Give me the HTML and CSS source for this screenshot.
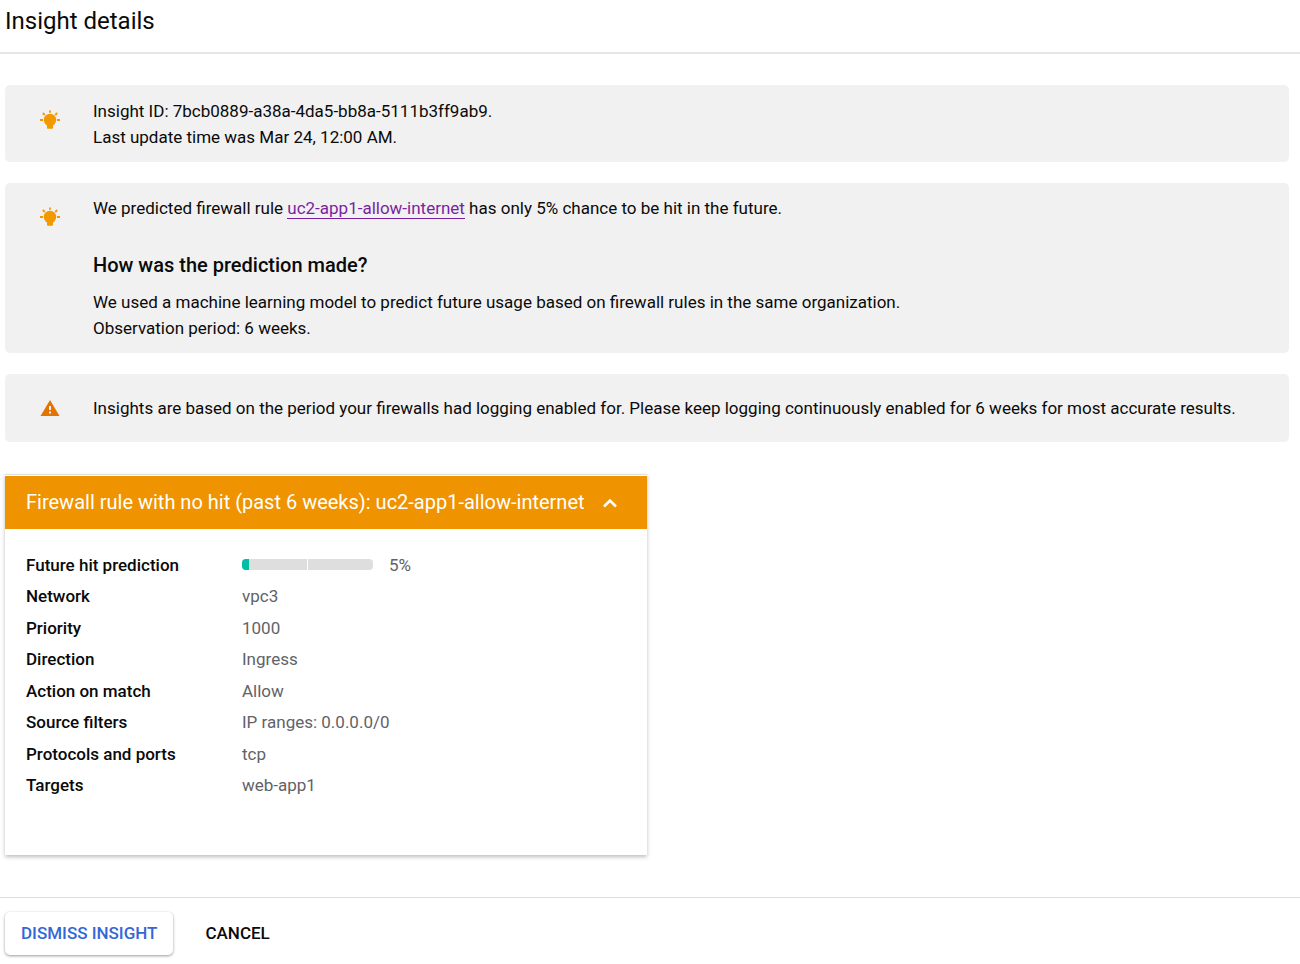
FILE: index.html
```html
<!DOCTYPE html>
<html lang="en">
<head>
<meta charset="utf-8">
<meta name="viewport" content="width=device-width, initial-scale=1">
<title>Insight details</title>
<link rel="stylesheet" href="styles.css">
</head>
<body>
<header class="page-header">
  <h1 class="page-title">Insight details</h1>
</header>
<main class="content">
  <section class="note note-summary">
    <svg class="note-icon" viewBox="0 0 24 24" aria-hidden="true">
      <circle cx="12" cy="12" r="6.2" fill="#f29900"/>
      <path d="M9 16h6v4q0 .8-.8.8H9.800q-.8 0-.8-.8z" fill="#f29900"/>
      <path d="M12 2.500v2.200M4.800 5l2 2M19.200 5l-2 2M2 12h3M19 12h3" stroke="#f29900" stroke-width="1.800" fill="none"/>
    </svg>
    <div class="note-text">
      <p>Insight ID: 7bcb0889-a38a-4da5-bb8a-5111b3ff9ab9.</p>
      <p>Last update time was Mar 24, 12:00 AM.</p>
    </div>
  </section>
  <section class="note">
    <svg class="note-icon" viewBox="0 0 24 24" aria-hidden="true">
      <circle cx="12" cy="12" r="6.2" fill="#f29900"/>
      <path d="M9 16h6v4q0 .8-.8.8H9.800q-.8 0-.8-.8z" fill="#f29900"/>
      <path d="M12 2.500v2.200M4.800 5l2 2M19.200 5l-2 2M2 12h3M19 12h3" stroke="#f29900" stroke-width="1.800" fill="none"/>
    </svg>
    <div class="note-text">
      <p>We predicted firewall rule <a class="rule-link" href="#rule">uc2-app1-allow-internet</a> has only 5% chance to be hit in the future.</p>
      <h2 class="note-heading">How was the prediction made?</h2>
      <p>We used a machine learning model to predict future usage based on firewall rules in the same organization.</p>
      <p>Observation period: 6 weeks.</p>
    </div>
  </section>
  <section class="note note-warning">
    <svg class="note-icon" viewBox="0 0 24 24" aria-hidden="true">
      <path d="M12 4L21.500 20h-19z" fill="#e37400"/>
      <path d="M12 10v4M12 15.500v2" stroke="#f1f1f1" stroke-width="2"/>
    </svg>
    <div class="note-text">
      <p>Insights are based on the period your firewalls had logging enabled for. Please keep logging continuously enabled for 6 weeks for most accurate results.</p>
    </div>
  </section>
  <section class="rule-card" id="rule">
    <button class="rule-toggle" type="button" aria-expanded="true">
      <span>Firewall rule with no hit (past 6 weeks): uc2-app1-allow-internet</span>
      <svg class="chevron" viewBox="0 0 16 16" aria-hidden="true"><path d="M2 11.500l6-6 6 6" fill="none" stroke="#fff" stroke-width="2.500"/></svg>
    </button>
    <dl class="rule-details">
      <dt>Future hit prediction</dt>
      <dd class="prediction"><span class="bar"><span class="bar-fill" style="width: 5%"></span></span>5%</dd>
      <dt>Network</dt><dd>vpc3</dd>
      <dt>Priority</dt><dd>1000</dd>
      <dt>Direction</dt><dd>Ingress</dd>
      <dt>Action on match</dt><dd>Allow</dd>
      <dt>Source filters</dt><dd>IP ranges: 0.0.0.0/0</dd>
      <dt>Protocols and ports</dt><dd>tcp</dd>
      <dt>Targets</dt><dd>web-app1</dd>
    </dl>
  </section>
</main>
<footer class="actions">
  <button class="btn btn-raised" type="button">DISMISS INSIGHT</button>
  <button class="btn" type="button">CANCEL</button>
</footer>
</body>
</html>
```
FILE: styles.css
```css
* { box-sizing: border-box; }

body {
  margin: 0;
  background: #fff;
  color: #0a0a0a;
  font: 17px/26px Roboto, "Liberation Sans", sans-serif;
}

h1, h2, p, dl, dd { margin: 0; }

button { font-family: inherit; cursor: pointer; }

.page-header {
  padding: 5px 5px 14px;
  border-bottom: 2px solid #e6e6e6;
}

.page-title {
  font-size: 24px;
  font-weight: 400;
  line-height: 33px;
}

.content {
  display: flex;
  flex-direction: column;
  gap: 21px;
  padding: 31px 11px 42px 5px;
}

.note {
  display: flex;
  align-items: flex-start;
  gap: 31px;
  padding: 12px 33px;
  border-radius: 5px;
  background: #f1f1f1;
}

.note-summary { padding-top: 13px; }

.note-icon {
  flex: none;
  width: 24px;
  height: 24px;
  margin-top: 10px;
}

.note-warning {
  align-items: center;
  padding-block: 21px;
}

.note-warning .note-icon { margin-top: 0; }

.note-heading {
  margin: 31px 0 10px;
  font-size: 20px;
  font-weight: 500;
  line-height: 27px;
}

.rule-link {
  color: #7b1fa2;
  text-decoration: none;
  border-bottom: 1px solid #7b1fa2;
}

.rule-card {
  width: 50%;
  margin-top: 11px;
  border-top: 1px solid #e0e0e0;
  padding-top: 1px;
  box-shadow: 0 2px 4px rgba(0, 0, 0, .26);
}

.rule-toggle {
  display: flex;
  align-items: center;
  gap: 17px;
  width: 100%;
  padding: 13px 21px;
  border: 0;
  background: #f09300;
  color: #fff;
  font-size: 20px;
  line-height: 27px;
  text-align: left;
}

.chevron { flex: none; width: 16px; height: 16px; }

.rule-details {
  display: grid;
  grid-template-columns: 216px 1fr;
  align-items: center;
  min-height: 326px;
  padding: 20px 21px 54px;
}

.rule-details dt { font-weight: 500; }

.rule-details dd { color: #5f6368; }

.rule-details .prediction {
  display: flex;
  align-items: center;
  gap: 16px;
}

.bar {
  width: 131px;
  height: 11px;
  overflow: hidden;
  border-radius: 4px;
  background: linear-gradient(#fff, #fff) center / 1px 100% no-repeat #dedede;
}

.bar-fill {
  display: block;
  height: 100%;
  background: #00bfa5;
}

.actions {
  display: flex;
  align-items: center;
  gap: 16px;
  padding: 14px 5px 9px;
  border-top: 1px solid #dadce0;
}

.btn {
  padding: 8px 16px;
  border: 0;
  border-radius: 5px;
  background: #fff;
  color: #0a0a0a;
  font-size: 17px;
  font-weight: 500;
  line-height: 27px;
}

.btn-raised {
  color: #3367d6;
  box-shadow: 0 1px 3px rgba(0, 0, 0, .4);
}
```
